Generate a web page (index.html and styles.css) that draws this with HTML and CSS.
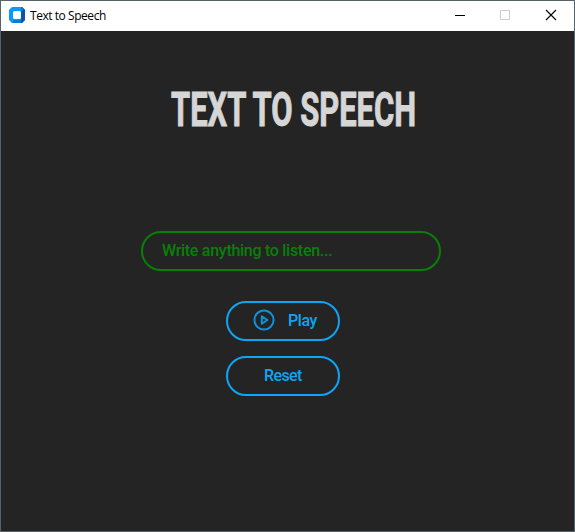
FILE: index.html
```
<!DOCTYPE html>
<html lang="en">
<head>
<meta charset="utf-8">
<title>Text to Speech</title>
<link rel="stylesheet" href="styles.css">
</head>
<body>
<div class="window">
  <header class="titlebar">
    <svg class="app-icon" width="16" height="16" viewBox="0 0 16 16">
      <path fill="#0a98fb" d="M3 0h10l3 3v10l-3 3H3l-3-3V3z"/>
      <path fill="#0756a8" d="M12 0h1l3 3v10l-3 3h-1z"/>
      <path fill="#087bd6" d="M12 0h1l2 2-3 3zM3 16l2-3h7v3z"/>
      <rect x="4" y="4" width="8" height="8" rx="1.5" fill="#fff"/>
    </svg>
    <span class="caption">Text to Speech</span>
    <div class="controls">
      <svg width="45" height="30" viewBox="0 0 45 30"><path d="M17 14.5h10" stroke="#000"/></svg>
      <svg width="45" height="30" viewBox="0 0 45 30"><path d="M17.5 9.5h9v9h-9z" stroke="#ccc" fill="none"/></svg>
      <svg width="45" height="30" viewBox="0 0 45 30"><path d="M18 9l10 10M28 9L18 19" stroke="#000" stroke-width="1.1"/></svg>
    </div>
  </header>
  <main class="content">
    <h1 class="heading">
      <svg width="246" height="40" viewBox="0 0 246 40"><text x="0" y="36.5" textLength="245" lengthAdjust="spacingAndGlyphs">TEXT TO SPEECH</text></svg>
    </h1>
    <input class="entry" type="text" placeholder="Write anything to listen...">
    <button class="button play">
      <svg width="22" height="22" viewBox="0 0 22 22" fill="none" stroke="#0d91d8" stroke-width="2" stroke-linejoin="round"><circle cx="11" cy="11" r="9.6"/><path d="M8.8 7.3v7.4l5.7-3.7z"/></svg>
      <span>Play</span>
    </button>
    <button class="button reset"><span>Reset</span></button>
  </main>
</div>
</body>
</html>
```
FILE: styles.css
```
* { box-sizing: border-box; }
body { margin: 0; }
.window {
  width: 575px;
  height: 532px;
  border: 1px solid #56636b;
  background: #242424;
  display: flex;
  flex-direction: column;
}
.titlebar {
  height: 30px;
  flex: none;
  background: #fff;
  display: flex;
  align-items: center;
  padding-left: 8px;
}
.app-icon { flex: none; margin-top: -2px; }
.caption {
  margin: -1px 0 0 5px;
  font: 12px "Open Sans", "Noto Sans", sans-serif;
  letter-spacing: -0.45px;
  color: #000;
  white-space: nowrap;
}
.controls { margin-left: auto; display: flex; margin-right: 1px; }
.controls svg { display: block; }
.content {
  display: flex;
  flex-direction: column;
  align-items: flex-start;
  padding-top: 58px;
}
.heading { margin: 0 0 0 170px; height: 40px; }
.heading svg { display: block; overflow: visible; }
.heading text {
  font: 700 48px Roboto, sans-serif;
  fill: #d6d6d6;
  stroke: #d6d6d6;
  stroke-width: 1px;
}
.entry, .button {
  height: 40px;
  border: 2px solid #0ea5f5;
  border-radius: 20px;
  background: transparent;
  font: 500 16px Roboto, sans-serif;
  color: #0ea5f5;
}
.entry {
  margin: 102px 0 0 140px;
  width: 300px;
  padding: 0 19px 1px;
  border-color: #078007;
  color: #078007;
  letter-spacing: -0.28px;
}
.entry::placeholder { color: #078007; opacity: 1; }
.button {
  width: 114px;
  margin-left: 225px;
  padding: 0 0 1px;
  display: flex;
  align-items: center;
  letter-spacing: -0.4px;
}
.play { margin-top: 30px; padding-left: 25px; gap: 13px; }
.play svg { margin-top: -1px; }
.reset { margin-top: 15px; padding-left: 36px; letter-spacing: -0.6px; }
```
